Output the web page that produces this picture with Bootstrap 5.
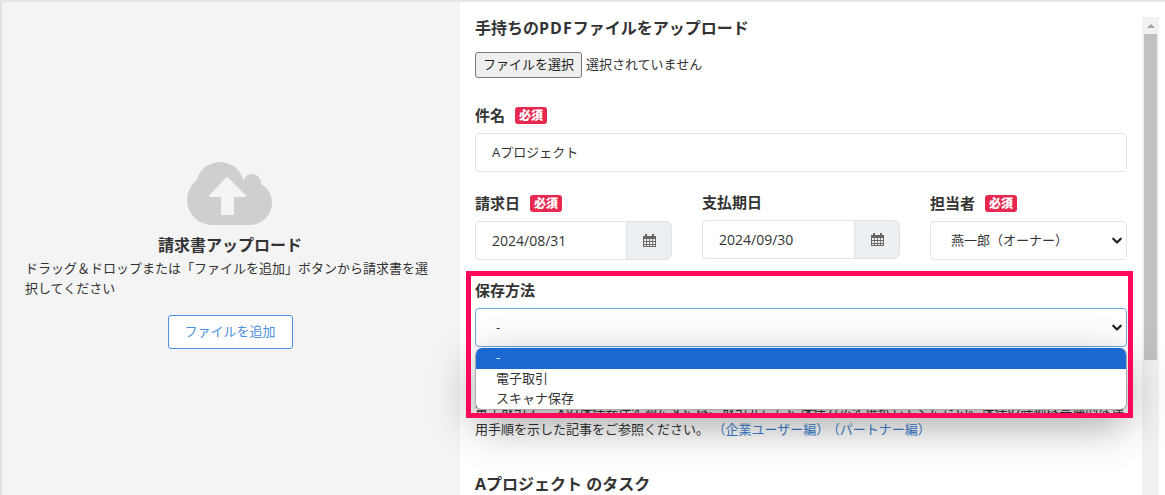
<!DOCTYPE html>
<html lang="ja">
<head>
  <meta charset="UTF-8">
  <title>請求書アップロード</title>
  <link href="https://cdn.jsdelivr.net/npm/bootstrap@5.3.0/dist/css/bootstrap.min.css" rel="stylesheet">
  <style>
    body {
      height: 495px;
      overflow: hidden;
      background-color: #ffffff;
      color: #333333;
      font-family: "Open Sans", "Noto Sans CJK JP", sans-serif;
      font-size: 13px;
    }

    .page-wrap {
      height: 495px;
      border-top: 2px solid #e4e6ea;
    }

    .upload-side {
      width: 460px;
      padding: 14px 25px 0 23px;
      background-color: #f4f4f4;
      border-left: 2px solid #e2e2e2;
    }

    .upload-title {
      margin: 9px 0 0;
      font-size: 16px;
      font-weight: 700;
      line-height: 22px;
    }

    .upload-desc {
      width: 100%;
      margin: 2px 0 17px;
      line-height: 20px;
    }

    .add-btn {
      --bs-btn-color: #4a8fe0;
      --bs-btn-border-color: #4a90e2;
      --bs-btn-hover-color: #4a8fe0;
      --bs-btn-hover-bg: #ffffff;
      --bs-btn-hover-border-color: #4a90e2;
      width: 125px;
      height: 34px;
      padding: 0;
      background-color: #ffffff;
      border-radius: 3px;
      font-size: 13px;
    }

    .form-side {
      width: 667px;
      padding: 15px 0 0 15px;
    }

    .sec-title {
      margin: 0 0 13px;
      font-size: 16px;
      font-weight: 700;
      line-height: 22px;
    }

    .latin-word {
      letter-spacing: 1px;
    }

    .file-btn {
      width: 107px;
      height: 26px;
      padding: 0;
      color: #222222;
      background-color: #efefef;
      border: 1px solid #767676;
      border-radius: 3px;
      font-size: 13px;
    }

    .file-row {
      margin-bottom: 27px;
    }

    .field-label {
      display: flex;
      align-items: center;
      gap: 10px;
      margin: 0 0 8px;
      font-size: 15px;
      font-weight: 700;
      line-height: 20px;
      min-height: 20px;
    }

    .field-label.no-tag {
      line-height: 19px;
      min-height: 19px;
    }

    .must-tag {
      width: 32px;
      height: 17px;
      padding: 0;
      line-height: 17px;
      background-color: #e8294f;
      border-radius: 3px;
      font-size: 12px;
      font-weight: 900;
    }

    .form-control.field-box,
    .form-select.field-box {
      height: 39px;
      padding: 0 16px;
      color: #333333;
      border-color: #dde5e6;
      border-radius: 4px;
      font-size: 13px;
      box-shadow: none;
    }

    .form-control.field-box.title-box {
      padding-bottom: 3px;
    }

    .form-select.field-box {
      padding-left: 20px;
      background-image: url("data:image/svg+xml,%3csvg xmlns='http://www.w3.org/2000/svg' viewBox='0 0 16 16'%3e%3cpath fill='none' stroke='%23222' stroke-linecap='round' stroke-linejoin='round' stroke-width='3' d='M3 5l5 5 5-5'/%3e%3c/svg%3e");
      background-position: right 3px center;
      background-size: 12px 12px;
    }

    .form-select.field-box.is-open {
      border-color: #6aa9e0;
    }

    .form-control.field-box.date-text {
      font-size: 14px;
    }

    .date-addon {
      width: 46px;
      justify-content: center;
      padding: 0;
      background-color: #edf0f2;
      border-color: #dde5e6;
    }

    .date-col {
      width: 197px;
    }

    .date-col.is-wide {
      width: 198px;
    }

    .date-row {
      gap: 30px;
      margin-top: 21px;
    }

    .save-block {
      margin-top: 20px;
    }

    .opt-menu {
      top: 40px;
      left: 0;
      right: 0;
      z-index: 5;
      height: 62px;
      overflow: hidden;
      background-color: #ffffff;
      border: 1px solid #aaaaaa;
      border-top: 0;
      border-radius: 7px;
      box-shadow: 0 14px 44px rgba(0, 0, 0, .38);
    }

    .opt-row {
      height: 20px;
      padding-left: 20px;
      line-height: 18px;
    }

    .opt-row.is-active {
      height: 21px;
      color: #ffffff;
      background-color: #1a69d3;
    }

    .mark-frame {
      top: -9px;
      left: -9px;
      right: -6px;
      z-index: 6;
      height: 147px;
      border: 5px solid #ff0a5a;
      pointer-events: none;
    }

    .help-text {
      margin: 52px 0 0;
      line-height: 20px;
    }

    .help-text a {
      color: #3e7fd0;
      text-decoration: none;
    }

    .task-title {
      margin: 34px 0 0;
      font-size: 16px;
      font-weight: 700;
      line-height: 22px;
    }

    .scroll-track {
      width: 17px;
      margin: 15px 0 0 15px;
      background-color: #f1f1f1;
    }

    .scroll-up {
      height: 17px;
    }

    .scroll-up::before {
      content: "";
      width: 0;
      height: 0;
      border-left: 4px solid transparent;
      border-right: 4px solid transparent;
      border-bottom: 4px solid #a3a3a3;
    }

    .scroll-thumb {
      height: 326px;
      margin: 0 2px;
      background-color: #c1c1c1;
    }
  </style>
</head>
<body>
  <div class="page-wrap d-flex">

    <div class="upload-side d-flex flex-column align-items-center justify-content-center flex-shrink-0">
      <svg width="86" height="63" viewBox="0 0 86 63" fill="#cfcfcf" aria-hidden="true">
        <circle cx="33" cy="24" r="24"/>
        <circle cx="65" cy="21" r="9"/>
        <circle cx="25" cy="38" r="25"/>
        <circle cx="63" cy="41" r="22"/>
        <rect x="25" y="30" width="38" height="33"/>
        <path d="M40 16 L23 34 H35 V52 H46 V34 H58 Z" fill="#f4f4f4" stroke="#f4f4f4" stroke-width="2" stroke-linejoin="round"/>
      </svg>
      <p class="upload-title">請求書アップロード</p>
      <p class="upload-desc">ドラッグ＆ドロップまたは「ファイルを追加」ボタンから請求書を選択してください</p>
      <button type="button" class="btn add-btn">ファイルを追加</button>
    </div>

    <div class="form-side flex-shrink-0">
      <p class="sec-title">手持ちの<span class="latin-word">PDF</span>ファイルをアップロード</p>
      <div class="file-row d-flex align-items-center gap-1">
        <button type="button" class="file-btn">ファイルを選択</button>
        <span>選択されていません</span>
      </div>

      <div>
        <label class="field-label">件名 <span class="badge must-tag">必須</span></label>
        <input type="text" class="form-control field-box title-box" value="Aプロジェクト">
      </div>

      <div class="d-flex date-row">
        <div class="date-col">
          <label class="field-label">請求日 <span class="badge must-tag">必須</span></label>
          <div class="input-group">
            <input type="text" class="form-control field-box date-text" value="2024/08/31">
            <span class="input-group-text date-addon">
              <svg width="13" height="13" viewBox="0 0 13 13" aria-hidden="true"><path fill="#666" d="M2 0h2v2h5V0h2v2h2v11H0V2h2z"/><path fill="#edf0f2" d="M1 5h2.2v2H1zM4 5h2.2v2H4zM7 5h2.2v2H7zM10 5h2v2h-2zM1 8h2.2v2H1zM4 8h2.2v2H4zM7 8h2.2v2H7zM10 8h2v2h-2zM1 11h2.2v1H1zM4 11h2.2v1H4zM7 11h2.2v1H7zM10 11h2v1h-2z"/></svg>
            </span>
          </div>
        </div>
        <div class="date-col is-wide">
          <label class="field-label no-tag">支払期日</label>
          <div class="input-group">
            <input type="text" class="form-control field-box date-text" value="2024/09/30">
            <span class="input-group-text date-addon">
              <svg width="13" height="13" viewBox="0 0 13 13" aria-hidden="true"><path fill="#666" d="M2 0h2v2h5V0h2v2h2v11H0V2h2z"/><path fill="#edf0f2" d="M1 5h2.2v2H1zM4 5h2.2v2H4zM7 5h2.2v2H7zM10 5h2v2h-2zM1 8h2.2v2H1zM4 8h2.2v2H4zM7 8h2.2v2H7zM10 8h2v2h-2zM1 11h2.2v1H1zM4 11h2.2v1H4zM7 11h2.2v1H7zM10 11h2v1h-2z"/></svg>
            </span>
          </div>
        </div>
        <div class="date-col">
          <label class="field-label">担当者 <span class="badge must-tag">必須</span></label>
          <select class="form-select field-box">
            <option>燕一郎（オーナー）</option>
          </select>
        </div>
      </div>

      <div class="save-block position-relative">
        <label class="field-label">保存方法</label>
        <div class="position-relative">
          <select class="form-select field-box is-open">
            <option>-</option>
          </select>
          <div class="opt-menu position-absolute">
            <div class="opt-row is-active">-</div>
            <div class="opt-row">電子取引</div>
            <div class="opt-row">スキャナ保存</div>
          </div>
        </div>
        <div class="mark-frame position-absolute"></div>
      </div>

      <p class="help-text">電子取引データの保存要件を満たすには、取引先ごとに保存方法を選択してください。保存の詳細は具体的な運用手順を示した記事をご参照ください。 <a href="#">（企業ユーザー編）</a><a href="#" class="ms-1">（パートナー編）</a></p>

      <p class="task-title">Aプロジェクト のタスク</p>
    </div>

    <div class="scroll-track flex-shrink-0">
      <div class="scroll-up d-flex align-items-center justify-content-center"></div>
      <div class="scroll-thumb"></div>
    </div>

  </div>
  <script src="https://cdn.jsdelivr.net/npm/bootstrap@5.3.0/dist/js/bootstrap.bundle.min.js"></script>
</body>
</html>
